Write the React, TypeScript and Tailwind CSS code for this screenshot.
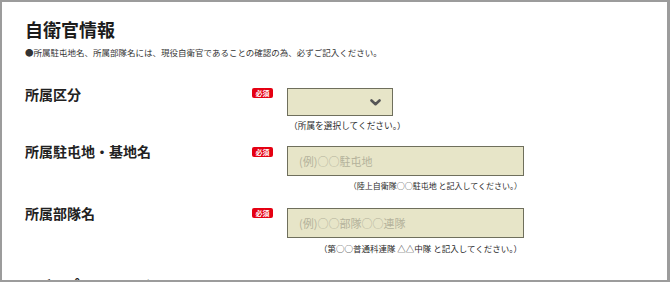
import React from 'react'

const font = { fontFamily: '"Noto Sans CJK JP", "Noto Sans", sans-serif' }

const Badge = () => (
  <span className="flex h-[10px] w-[21px] items-center justify-center rounded-[2px] bg-[#e50012] text-[7px] leading-none font-bold text-white">
    必須
  </span>
)

const Chevron = () => (
  <svg width="11" height="7" viewBox="0 0 11 7" className="block">
    <polyline points="1.5,1.5 5.5,5.2 9.5,1.5" fill="none" stroke="#555" strokeWidth="2.6" strokeLinecap="round" strokeLinejoin="round" />
  </svg>
)

const App = () => {
  return (
    <div style={font} className="h-[282px] w-[670px] overflow-hidden border-t-2 border-l-2 border-b-2 border-r-[3px] border-[#9c9c9c] bg-white pl-[23px] pt-[18px] text-[#222]">
      <h1 className="text-[18px] leading-[18px] font-bold text-[#1c1c1c]">自衛官情報</h1>
      <p className="mt-[9px] text-[8.5px] leading-[10px] text-[#333]">
        ●所属駐屯地名、所属部隊名には、現役自衛官であることの確認の為、必ずご記入ください。
      </p>

      {/* 所属区分 */}
      <div className="mt-[31px] flex items-start">
        <div className="-mt-[1px] w-[227px] text-[14px] leading-[14px] font-bold">所属区分</div>
        <div className="w-[35px]"><Badge /></div>
        <div className="w-[237px]">
          <div className="flex h-[28px] w-[106px] items-center justify-end border-[1.5px] border-[#6f6f5c] bg-[#e7e5c8] pr-[11px]">
            <Chevron />
          </div>
          <p className="mt-[5px] ml-[2px] text-[8.7px] leading-[10px] text-[#2a2a2a]">（所属を選択してください。）</p>
        </div>
      </div>

      {/* 所属駐屯地・基地名 */}
      <div className="mt-[15px] flex items-start">
        <div className="-mt-[2px] w-[227px] text-[14px] leading-[14px] font-bold">所属駐屯地・基地名</div>
        <div className="mt-[1px] w-[35px]"><Badge /></div>
        <div className="w-[237px]">
          <input
            placeholder="(例)○○駐屯地"
            className="block h-[30px] w-[237px] border-[1.5px] border-[#6f6f5c] bg-[#e7e5c8] px-[11px] text-[11px] outline-none placeholder:text-[#b4b29b]"
          />
          <p className="mt-[5px] pr-[2px] text-right text-[8px] leading-[10px] text-[#2a2a2a]">（陸上自衛隊○○駐屯地 と記入してください。）</p>
        </div>
      </div>

      {/* 所属部隊名 */}
      <div className="mt-[17px] flex items-start">
        <div className="-mt-[2px] w-[227px] text-[14px] leading-[14px] font-bold">所属部隊名</div>
        <div className="w-[35px]"><Badge /></div>
        <div className="w-[237px]">
          <input
            placeholder="(例)○○部隊○○連隊"
            className="block h-[30px] w-[237px] border-[1.5px] border-[#6f6f5c] bg-[#e7e5c8] px-[11px] text-[11px] outline-none placeholder:text-[#b4b29b]"
          />
          <p className="mt-[5px] pr-[2px] text-right text-[8.5px] leading-[10px] whitespace-nowrap text-[#2a2a2a]">（第○○普通科連隊 △△中隊 と記入してください。）</p>
        </div>
      </div>

      <h2 className="mt-[24px] text-[18px] leading-[18px] font-bold text-[#1c1c1c]">IDとパスワード</h2>
    </div>
  )
}

export default App
